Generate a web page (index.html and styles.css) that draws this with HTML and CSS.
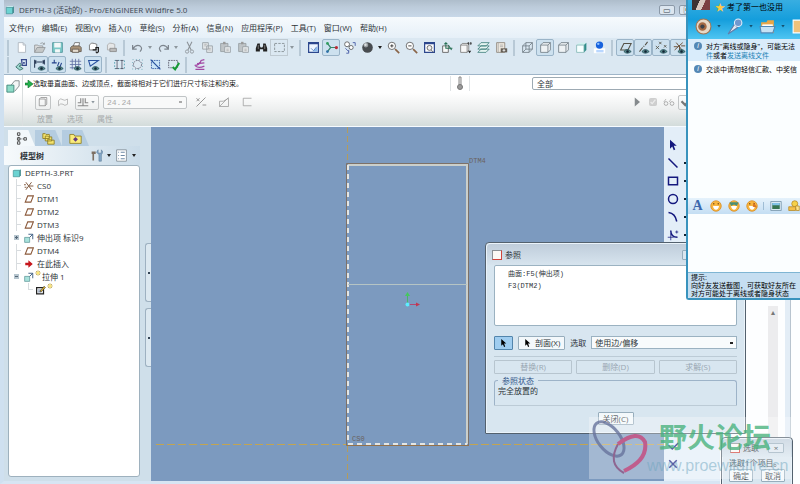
FILE: index.html
```html
<!DOCTYPE html>
<html lang="zh-CN">
<head>
  <meta charset="UTF-8">
  <meta name="viewport" content="width=device-width, initial-scale=1.0">
  <title>DEPTH-3 (活动的) - Pro/ENGINEER Wildfire 5.0</title>
  <link rel="stylesheet" href="styles.css">
</head>
<body>

  <!-- Icon set -->
  <svg class="sprite" aria-hidden="true">
    <symbol id="new" viewBox="0 0 16 16"><path d="M4 2h6l3 3v9H4z" fill="#fff" stroke="#aab3bb"/><path d="M10 2v3h3" fill="none" stroke="#aab3bb"/></symbol>
    <symbol id="open" viewBox="0 0 16 16"><path d="M2 14V5h4l1 1h5v2" fill="#ddd" stroke="#909598"/><path d="M2 14l3-6h10l-3 6z" fill="#c5c8c8" stroke="#909598"/><path d="M9 3q3-2 5 1m0-2v2h-2" fill="none" stroke="#909598"/></symbol>
    <symbol id="save" viewBox="0 0 16 16"><path d="M2 2h12v12H2z" fill="#7cc9c8" stroke="#4d9197"/><path d="M4 2h8v6H4zM5 10h6v4H5z" fill="#f3f7f7"/></symbol>
    <symbol id="print" viewBox="0 0 16 16"><path d="M5 7l2-5h6l-1 5" fill="#fff" stroke="#666"/><path d="M2 8l2-2h9l2 2v5H2z" fill="#a99379" stroke="#5d5349"/><path d="M4 10h8v4H4z" fill="#e6ddd0" stroke="#5d5349"/></symbol>
    <symbol id="mail" viewBox="0 0 16 16"><path d="M3 11V5q2-4 6-2l3 1v7z" fill="#fff" stroke="#666"/><path d="M7 11h4V8h3v5q-2 3-3 0" fill="none" stroke="#222" stroke-width="1.5"/></symbol>
    <symbol id="mailoff" viewBox="0 0 16 16"><path d="M3 11V5q2-4 6-2l3 1v7z" fill="#e5e7e8" stroke="#aaa"/><path d="M6 9h8v4H6z" fill="#bbb" stroke="#888"/></symbol>
    <symbol id="undo" viewBox="0 0 16 16"><path d="M2 5v5h5M2 10q4-6 9-4 4 3 0 7" fill="none" stroke="#7d858e" stroke-width="1.5"/></symbol>
    <symbol id="redo" viewBox="0 0 16 16"><path d="M14 5v5H9M14 10Q10 4 5 6q-4 3 0 7" fill="none" stroke="#7d858e" stroke-width="1.5"/></symbol>
    <symbol id="cut" viewBox="0 0 16 16"><path d="M5 1l5 10M11 1L6 11" fill="none" stroke="#8b9196" stroke-width="1.3"/><circle cx="5" cy="13" r="2" fill="none" stroke="#8b9196"/><circle cx="11" cy="13" r="2" fill="none" stroke="#8b9196"/></symbol>
    <symbol id="copy" viewBox="0 0 16 16"><path d="M2 2h7v8H2zM7 6h7v8H7z" fill="#e4e8ea" stroke="#959ca1"/><path d="M9 9h3M9 11h3M4 4h3M4 6h2" stroke="#aaa"/></symbol>
    <symbol id="paste" viewBox="0 0 16 16"><path d="M2 3h9v10H2z" fill="#bfc4c7" stroke="#959ca1"/><path d="M5 1h3v3H5z" fill="#999"/><path d="M7 7h7v7H7z" fill="#e8ebec" stroke="#959ca1"/><path d="M9 10h3M9 12h3" stroke="#aaa"/></symbol>
    <symbol id="find" viewBox="0 0 16 16"><path d="M3 3h3v3l1 2h2l1-2V3h3l2 6v4h-5v-3H6v3H1V9z" fill="#222"/><path d="M4 5v5M12 5v5" stroke="#8a8a8a"/></symbol>
    <symbol id="marquee" viewBox="0 0 16 16"><path d="M2 3h12v10H2z" fill="none" stroke="#7e878d" stroke-dasharray="3 1.5"/></symbol>
    <symbol id="repaint" viewBox="0 0 16 16"><path d="M2 2h12v12H2z" fill="#eef6ff" stroke="#2b468d" stroke-width="1.5"/><path d="M2 3h12" stroke="#2b468d" stroke-width="2"/><path d="M7 13l6-6v6z" fill="#88b9ec"/><path d="M5 9l3 3 4-5" fill="none" stroke="#4c77b9"/></symbol>
    <symbol id="spin" viewBox="0 0 16 16"><path d="M3 3l4 5-4 5M7 8h6" fill="none" stroke="#36866b" stroke-width="1.5"/><circle cx="3" cy="3" r="1.7" fill="#2f9d5d"/><circle cx="3" cy="13" r="1.7" fill="#2c6fa8"/><circle cx="14" cy="8" r="2" fill="#b92a35"/></symbol>
    <symbol id="orient" viewBox="0 0 16 16"><circle cx="5" cy="4" r="3" fill="#fff" stroke="#555"/><circle cx="10" cy="8" r="2.500" fill="#fff" stroke="#555"/><path d="M12 2h3v4M3 9l4 4M7 11v4H4" fill="none" stroke="#3a4fa0"/></symbol>
    <symbol id="sphere" viewBox="0 0 16 16"><circle cx="8" cy="8" r="6.500" fill="#484c50"/><circle cx="6" cy="5" r="3" fill="#9ba0a4"/><circle cx="5.500" cy="4.500" r="1.500" fill="#dcdfe1"/></symbol>
    <symbol id="zoomin" viewBox="0 0 16 16"><circle cx="6" cy="6" r="4.500" fill="#fff" stroke="#555"/><path d="M10 10l5 5" stroke="#8a6548" stroke-width="2"/><path d="M4 6h4M6 4v4" stroke="#222"/></symbol>
    <symbol id="zoomout" viewBox="0 0 16 16"><circle cx="6" cy="6" r="4.500" fill="#fff" stroke="#555"/><path d="M10 10l5 5" stroke="#8a6548" stroke-width="2"/><path d="M4 6h4" stroke="#222"/></symbol>
    <symbol id="refit" viewBox="0 0 16 16"><path d="M2 2h12v12H2z" fill="#fff" stroke="#2b468d" stroke-width="1.500"/><path d="M2 3h12" stroke="#2b468d" stroke-width="2"/><circle cx="8" cy="8.500" r="3" fill="#f2f2f2" stroke="#555"/><path d="M10 11l3 3" stroke="#555"/></symbol>
    <symbol id="reorient" viewBox="0 0 16 16"><path d="M2 6h7v8H2z" fill="#f8f8f8" stroke="#555"/><path d="M6 2v7h8M4 4l2-2 2 2M9 5l4 6" fill="none" stroke="#287054" stroke-width="1.300"/></symbol>
    <symbol id="saved" viewBox="0 0 16 16"><path d="M2 5h8v9H2zM2 5l2-2h8v8l-2 3" fill="#f7f7f7" stroke="#777"/><path d="M11 2h1v2h-1zM14 2h1v2h-1z" fill="none" stroke="#333"/><path d="M11 12h4l-2 3z" fill="#222"/></symbol>
    <symbol id="layers" viewBox="0 0 16 16"><path d="M1 14l4-4h10l-4 4zM1 10l4-4h10l-4 4zM1 6l4-4h10l-4 4z" fill="#e5f4f1" stroke="#3f7f7d"/></symbol>
    <symbol id="viewmgr" viewBox="0 0 16 16"><path d="M2 2h10v12H2z" fill="#efe9df" stroke="#8a8378"/><path d="M4 2v12M6 5h4M6 7h4" stroke="#aaa"/><path d="M7 9h8v5H7z" fill="#655f57"/><circle cx="11" cy="11.500" r="1.500" fill="#ddd"/></symbol>
    <symbol id="wire" viewBox="0 0 16 16"><path d="M2 6h8v8H2zM6 2h8v8H6zM2 6l4-4M10 6l4-4M10 14l4-4M2 14l4-4" fill="none" stroke="#6e7a82"/></symbol>
    <symbol id="hidden" viewBox="0 0 16 16"><path d="M2 5h9v9H2zM2 5l3-3h9v9l-3 3M11 5l3-3" fill="#eef2f4" stroke="#6e7a82"/></symbol>
    <symbol id="shade" viewBox="0 0 16 16"><path d="M2 5l3-3h9l-3 3z" fill="#d0f1ee"/><path d="M11 5l3-3v9l-3 3z" fill="#318d8a"/><path d="M2 5h9v9H2z" fill="#f6ffff" stroke="#83b6b5"/></symbol>
    <symbol id="realism" viewBox="0 0 16 16"><path d="M1 9h14v6H1z" fill="#fff"/><path d="M4 11h9v3H4z" fill="#b9d7ff"/><circle cx="8" cy="5" r="4.500" fill="#1762dd"/><circle cx="6.500" cy="3.500" r="1.500" fill="#8fc2ff"/></symbol>
    <symbol id="eye" viewBox="0 0 16 16"><path d="M6 13q4-5 9 0-5 4-9 0z" fill="#5a8a8c" stroke="#234f58"/><circle cx="10.500" cy="13" r="1.500" fill="#123"/></symbol>
    <symbol id="plane" viewBox="0 0 16 16"><path d="M2 11L6 3h9l-4 8z" fill="none" stroke="#555247" stroke-width="1.300"/><use href="#eye"/></symbol>
    <symbol id="axis" viewBox="0 0 16 16"><path d="M3 13l4-5M8 7l1-1M10 5l3-4" stroke="#555247" stroke-width="1.300"/><use href="#eye"/></symbol>
    <symbol id="points" viewBox="0 0 16 16"><path d="M5 1l3 3M8 1L5 4M1 6l4 4M5 6l-4 4M11 5l3 3M14 5l-3 3" stroke="#555247"/><use href="#eye"/></symbol>
    <symbol id="csys" viewBox="0 0 16 16"><path d="M2 11L12 2M4 2l7 9M1 7h5M8 6v6M10 6h5" stroke="#6d533c" stroke-width="1.200"/><use href="#eye"/></symbol>
    <symbol id="sketchview" viewBox="0 0 16 16"><path d="M8 2h6v7H9z" fill="none" stroke="#34478b" stroke-width="1.500"/><path d="M10 5h2v2h-2z" fill="#34478b"/><path d="M1 11l5-5 2 3-3 1 5 3-4 2z" fill="#9ed8d0" stroke="#30655f"/></symbol>
    <symbol id="dims" viewBox="0 0 16 16"><path d="M2 2v10M14 2v6M2 5h12M4 3L2 5l2 2M12 3l2 2-2 2" fill="none" stroke="#2b3c58" stroke-width="1.300"/><use href="#eye"/></symbol>
    <symbol id="constr" viewBox="0 0 16 16"><path d="M1 6h6M4 2v4M8 10l2-5M11 11l2-5" fill="none" stroke="#23408a" stroke-width="1.300"/><use href="#eye"/></symbol>
    <symbol id="grid" viewBox="0 0 16 16"><path d="M4 1v13M8 1v13M12 1v10M1 4h14M1 8h14M1 12h6" stroke="#5f6fa3"/><use href="#eye"/></symbol>
    <symbol id="verts" viewBox="0 0 16 16"><path d="M2 3h12L4 10z" fill="#cfe6fa" stroke="#27509d" stroke-width="1.300"/><use href="#eye"/></symbol>
    <symbol id="rg1" viewBox="0 0 16 16"><path d="M2 3h12v10H2z" fill="none" stroke="#49a" stroke-dasharray="2 2"/><path d="M3 3h4M9 3h4M5 3v10M11 3v10M3 13h4M9 13h4" stroke="#556"/></symbol>
    <symbol id="rg2" viewBox="0 0 16 16"><circle cx="8" cy="8" r="5" fill="none" stroke="#556" stroke-dasharray="2 1"/><path d="M2 2h12v12H2z" fill="none" stroke="#59a" stroke-dasharray="1 3"/></symbol>
    <symbol id="rg3" viewBox="0 0 16 16"><path d="M3 3h10v10H3z" fill="#c9e4f8" stroke="#27509d" stroke-dasharray="2 1"/><path d="M2 2l12 12" stroke="#27509d" stroke-width="1.500"/></symbol>
    <symbol id="rg4" viewBox="0 0 16 16"><path d="M2 3h11v9H2z" fill="none" stroke="#556" stroke-dasharray="2 1"/><path d="M7 11l3 3 5-8" fill="none" stroke="#169a36" stroke-width="2.500"/></symbol>
    <symbol id="palette" viewBox="0 0 16 16"><path d="M2 9q6 0 8-6l4-1M3 10q4 3 11 0M5 7l9-1M3 14h11" fill="none" stroke="#a248a4" stroke-width="1.500"/></symbol>
    <symbol id="cube" viewBox="0 0 16 16"><path d="M2 4l2-2h10l-2 2z" fill="#c9f3f0"/><path d="M12 4l2-2v10l-2 2z" fill="#227a7d"/><path d="M2 4h10v10H2z" fill="#6cd3d2" stroke="#3b8c90"/></symbol>
    <symbol id="datum" viewBox="0 0 16 16"><path d="M2 13L6 3h9l-4 10z" fill="none" stroke="#8b5a3b" stroke-width="1.800"/></symbol>
    <symbol id="cs" viewBox="0 0 16 16"><path d="M3 14L12 2M3 2l9 12M8 8h7M0 6h3M1 10h3" stroke="#7b5237" stroke-width="1.500"/></symbol>
    <symbol id="extrude" viewBox="0 0 16 16"><path d="M1 7h8v8H1z" fill="#a9e2dc" stroke="#49888a"/><path d="M7 2h7v8M9 7l5-5" fill="none" stroke="#3e5e82" stroke-width="1.500"/></symbol>
    <symbol id="feature" viewBox="0 0 16 16"><path d="M5 8l5-6h5v6l-5 6" fill="#f4f6f6" stroke="#7c8587"/><path d="M1 7h8v8H1z" fill="#8fdcc8" stroke="#3c8577"/></symbol>
    <symbol id="insert" viewBox="0 0 16 16"><path d="M2 6h5V2l7 6-7 6v-4H2z" fill="#c6171d"/></symbol>
    <symbol id="sketch" viewBox="0 0 16 16"><path d="M1 4h11v10H1z" fill="#fff" stroke="#222" stroke-width="2"/><path d="M3 8h5M3 11h6" stroke="#247"/><path d="M6 10l7-8 2 2-7 7z" fill="#e2b62e" stroke="#333"/></symbol>
    <symbol id="cursor" viewBox="0 0 16 16"><path d="M4 1l9 8H9l2 5-2 1-2-5-3 3z"/></symbol>
    <symbol id="star" viewBox="0 0 16 16"><path d="M8 1v14M1 8h14M3 3l10 10M13 3L3 13" stroke="#b08d10" stroke-width="2"/><path d="M5 5h6v6H5z" fill="#ffe873"/></symbol>
    <symbol id="face" viewBox="0 0 16 16"><circle cx="8" cy="8" r="7" fill="#f9b63e" stroke="#d78a21"/><path d="M4 8h8q-1 5-4 5T4 8z" fill="#fff"/><path d="M5 4v2M11 4v2" stroke="#7a4a10" stroke-width="1.500"/></symbol>
  </svg>

  <!-- Page lying behind the application -->
  <div class="backdrop"><div class="backdrop-scroll">▴</div></div>

  <main class="app">
    <header class="titlebar">
      <svg class="icon small"><use href="#cube"/></svg>
      <span>DEPTH-3 (活动的) - Pro/ENGINEER Wildfire 5.0</span>
      <div class="winbuttons"><button aria-label="最小化">▭</button><button aria-label="最大化">▣</button></div>
    </header>

    <nav class="menubar">
      <button>文件(F)</button><button>编辑(E)</button><button>视图(V)</button><button>插入(I)</button><button>草绘(S)</button><button>分析(A)</button><button>信息(N)</button><button>应用程序(P)</button><button>工具(T)</button><button>窗口(W)</button><button>帮助(H)</button>
    </nav>

    <div class="toolbars">
      <div class="toolbar">
        <i class="sep"></i>
        <button><svg><use href="#new"/></svg></button>
        <button><svg><use href="#open"/></svg></button>
        <button><svg><use href="#save"/></svg></button>
        <button><svg><use href="#print"/></svg></button>
        <button><svg><use href="#mail"/></svg></button>
        <button><svg><use href="#mailoff"/></svg></button>
        <i class="sep"></i>
        <button><svg><use href="#undo"/></svg></button>
        <i class="drop off"></i>
        <button><svg><use href="#redo"/></svg></button>
        <i class="drop off"></i>
        <button><svg><use href="#cut"/></svg></button>
        <button><svg><use href="#copy"/></svg></button>
        <button><svg><use href="#paste"/></svg></button>
        <button><svg><use href="#paste"/></svg></button>
        <button><svg><use href="#find"/></svg></button>
        <button class="framed"><svg><use href="#marquee"/></svg></button>
        <i class="drop off"></i>
        <i class="sep"></i>
        <button><svg><use href="#repaint"/></svg></button>
        <button class="on"><svg><use href="#spin"/></svg></button>
        <button><svg><use href="#orient"/></svg></button>
        <button><svg><use href="#sphere"/></svg></button>
        <i class="drop"></i>
        <button><svg><use href="#zoomin"/></svg></button>
        <button><svg><use href="#zoomout"/></svg></button>
        <button><svg><use href="#refit"/></svg></button>
        <button><svg><use href="#reorient"/></svg></button>
        <button><svg><use href="#saved"/></svg></button>
        <button><svg><use href="#layers"/></svg></button>
        <button><svg><use href="#viewmgr"/></svg></button>
        <i class="sep"></i>
        <button><svg><use href="#wire"/></svg></button>
        <button class="on"><svg><use href="#hidden"/></svg></button>
        <button><svg><use href="#hidden"/></svg></button>
        <button><svg><use href="#shade"/></svg></button>
        <button><svg><use href="#realism"/></svg></button>
        <i class="sep"></i>
        <button class="on"><svg><use href="#plane"/></svg></button>
        <button class="on"><svg><use href="#axis"/></svg></button>
        <button class="on"><svg><use href="#points"/></svg></button>
        <button class="on"><svg><use href="#csys"/></svg></button>
      </div>
      <div class="toolbar">
        <i class="sep"></i>
        <button><svg><use href="#sketchview"/></svg></button>
        <button class="on"><svg><use href="#dims"/></svg></button>
        <button class="on"><svg><use href="#constr"/></svg></button>
        <button><svg><use href="#grid"/></svg></button>
        <button class="on"><svg><use href="#verts"/></svg></button>
        <i class="sep"></i>
        <button><svg><use href="#rg1"/></svg></button>
        <button><svg><use href="#rg2"/></svg></button>
        <button><svg><use href="#rg3"/></svg></button>
        <button><svg><use href="#rg4"/></svg></button>
        <i class="sep"></i>
        <button><svg><use href="#palette"/></svg></button>
      </div>
    </div>

    <section class="dashboard">
      <div class="dash-feature"><svg class="icon"><use href="#feature"/></svg></div>
      <div class="dash-main">
        <div class="message">
          <svg class="arrow" viewBox="0 0 8 8"><path d="M0 3h3V0l5 4-5 4V5H0z" fill="#21b14b" stroke="#11702b" stroke-width=".6"/></svg>
          <span class="message-text">选取垂直曲面、边或顶点，截面将相对于它们进行尺寸标注和约束。</span>
          <span class="status"><svg viewBox="0 0 8 14"><path d="M3 1h2v8H3z" fill="#eee" stroke="#888"/><circle cx="4" cy="11" r="2.500" fill="#999" stroke="#777"/></svg></span>
          <select class="filter" aria-label="过滤器"><option>全部</option></select>
        </div>
        <div class="controls">
          <button class="box"><svg viewBox="0 0 16 16"><path d="M3 4h8v9H3zM3 4l2-2h8v9l-2 2" fill="none" stroke="#8a8a8a"/></svg></button>
          <button><svg viewBox="0 0 16 16"><path d="M2 13V6q3-4 6-1 2 2 6-1v7q-4 3-6 0-3-2-6 2" fill="none" stroke="#aaa"/></svg></button>
          <button class="box wide"><svg viewBox="0 0 16 16"><path d="M1 13h14M1 9h4V3M5 3v6M11 3v6h4M8 3v10" fill="none" stroke="#888" stroke-width="1.500"/></svg><i class="drop off"></i></button>
          <select class="depth" aria-label="深度"><option>24.24</option></select>
          <button class="spread"><svg viewBox="0 0 16 16"><path d="M2 14L14 2M2 3l4 4M6 3L2 7M10 12h5" stroke="#777"/></svg></button>
          <button class="spread"><svg viewBox="0 0 16 16"><path d="M2 14V7h5l7-4v11zM2 14L14 2" fill="none" stroke="#999"/></svg></button>
          <button class="spread"><svg viewBox="0 0 16 16"><path d="M14 3H3v10h11" fill="none" stroke="#999"/></svg></button>
          <div class="confirm">
            <button><svg viewBox="0 0 16 16"><path d="M5 2l7 6-7 6z" fill="#858a8d"/></svg></button>
            <input type="checkbox" checked disabled aria-label="预览">
            <button><svg viewBox="0 0 16 16"><path d="M1 8l3-4M8 8l3-4" stroke="#aaa"/><circle cx="4" cy="10" r="2.500" fill="none" stroke="#999"/><circle cx="12" cy="10" r="2.500" fill="none" stroke="#999"/></svg></button>
            <button class="box"><svg viewBox="0 0 16 16"><path d="M2 7l5 5 7-8" fill="none" stroke="#777" stroke-width="3"/></svg></button>
          </div>
        </div>
        <div class="dash-tabs"><button disabled>放置</button><button disabled>选项</button><button disabled>属性</button></div>
      </div>
    </section>

    <div class="workspace">
      <aside class="navigator">
        <div class="navtabs">
          <button class="active"><svg viewBox="0 0 16 16"><path d="M3 1h3v3H3zM3 7h3v3H3zM3 12h3v3H3zM11 7h3v3h-3z" fill="none" stroke="#333"/><path d="M4.500 4v8M6 8.500h5" stroke="#333" stroke-dasharray="1 1"/></svg></button>
          <button><svg viewBox="0 0 16 16"><path d="M1 2h3l1 1h4v5H1zM4 5h3l1 1h4v5H4zM7 9h3l1 1h4v5H7z" fill="#f4e36c" stroke="#8b7a21"/></svg></button>
          <button><svg viewBox="0 0 16 16"><path d="M1 3h5l1 2h8v9H1z" fill="#faec7c" stroke="#8b7a21"/><path d="M8 6l3 3-3 3-3-3z" fill="#643b81"/></svg></button>
        </div>
        <div class="tree-head">
          <strong>模型树</strong>
          <svg class="icon" viewBox="0 0 16 16"><path d="M2 3h5v3H5v8H3V6H2z" fill="#7d6f62"/><path d="M10 1v4h4V1l2 3-2 3v8h-3V7L8 4z" fill="#86a9c8" stroke="#50708f" stroke-width=".6"/></svg><i class="drop"></i>
          <svg class="icon" viewBox="0 0 16 16"><path d="M2 1h12v14H2z" fill="#fff" stroke="#7b8791"/><path d="M4 4h1M7 4h5M4 8h1M7 8h5M4 12h1M7 12h5" stroke="#4c6f91"/></svg><i class="drop"></i>
        </div>
        <ul class="tree">
          <li class="root"><svg><use href="#cube"/></svg>DEPTH-3.PRT</li>
          <li><i class="node"></i><svg><use href="#cs"/></svg>CS0</li>
          <li><i class="node"></i><svg><use href="#datum"/></svg>DTM1</li>
          <li><i class="node"></i><svg><use href="#datum"/></svg>DTM2</li>
          <li><i class="node"></i><svg><use href="#datum"/></svg>DTM3</li>
          <li><i class="node plus"></i><svg><use href="#extrude"/></svg>伸出项 标识9</li>
          <li><i class="node"></i><svg><use href="#datum"/></svg>DTM4</li>
          <li><i class="node"></i><svg><use href="#insert"/></svg>在此插入</li>
          <li><i class="node minus"></i><svg><use href="#extrude"/></svg><svg class="new"><use href="#star"/></svg>拉伸 1</li>
          <li class="leaf"><i class="node"></i><svg><use href="#sketch"/></svg><svg class="new"><use href="#star"/></svg></li>
        </ul>
      </aside>
      <div class="splitter"><i></i><i></i></div>

      <div class="canvas">
        <svg class="drawing" width="513" height="354" viewBox="151 127 513 354">
          <g fill="none">
            <path d="M347.500 127v36M347.500 446v36" stroke="#b39c5c" stroke-dasharray="6 3"/>
            <path d="M156 444.500h190M470 444.500h194" stroke="#c2a450" stroke-dasharray="8 3"/>
            <path d="M346.500 163.500h122v282h-122z" stroke="#7d7168"/>
            <path d="M348 165h119v279" stroke="#cbcfcb" stroke-width="2"/>
            <path d="M348 165v279h119" stroke="#e3e6e5" stroke-width="2" stroke-dasharray="5 4"/>
            <path d="M347 445.500h122" stroke="#93714b"/>
            <path d="M348 284.500h119" stroke="#b5c4c4"/>
            <path d="M407.500 304v-9" stroke="#48b56b"/>
            <path d="M408 304.500h10" stroke="#b34770"/>
          </g>
          <path d="M405 296l2.500-4 2.500 4z" fill="#45c95d"/>
          <path d="M416 302.500l4 2-4 2z" fill="#c2374f"/>
          <circle cx="407.500" cy="304.500" r="2" fill="#5cecff"/>
          <text x="469" y="163">DTM4</text>
          <text x="352" y="441">CS0</text>
        </svg>
      </div>

      <div class="sketcher">
        <button><svg class="navy"><use href="#cursor"/></svg></button>
        <button class="more"><svg viewBox="0 0 16 16"><path d="M2 2l12 12"/></svg></button>
        <button class="more"><svg viewBox="0 0 16 16"><path d="M2 3h12v10H2z"/></svg></button>
        <button class="more"><svg viewBox="0 0 16 16"><circle cx="8" cy="8" r="6"/></svg></button>
        <button class="more"><svg viewBox="0 0 16 16"><path d="M2 2q9 1 11 12"/></svg></button>
        <button class="more"><svg viewBox="0 0 16 16"><path d="M5 2q0 9 9 9"/><path d="M5 6v9M1 11h8M13 2v4M11 4h4" stroke-width="1"/></svg></button>
        <div class="finish">
          <button><svg viewBox="0 0 16 16"><path d="M2 7l5 5 8-8"/></svg></button>
          <button><svg viewBox="0 0 16 16"><path d="M3 3l10 10M13 3L3 13"/></svg></button>
        </div>
      </div>
    </div>
  </main>

  <form class="dialog references">
    <div class="dialog-title"><i class="sheet"></i>参照<button type="button" class="shut" aria-label="关闭"></button></div>
    <div class="ref-list"><div>曲面:F5(伸出项)</div><div>F3(DTM2)</div></div>
    <div class="pick">
      <button type="button" class="pointer on" aria-label="选取参照"><svg><use href="#cursor"/></svg></button>
      <button type="button" class="pointer"><svg><use href="#cursor"/></svg>剖面(X)</button>
      <label for="pick-mode">选取</label>
      <select id="pick-mode"><option>使用边/偏移</option></select>
    </div>
    <div class="actions"><button disabled>替换(R)</button><button disabled>删除(D)</button><button disabled>求解(S)</button></div>
    <fieldset><legend>参照状态</legend>完全放置的</fieldset>
    <div class="dialog-foot"><button type="button">关闭(C)</button></div>
  </form>

  <section class="dialog chooser">
    <div class="dialog-title"><i class="sheet"></i>选取<button class="shut" aria-label="关闭">×</button></div>
    <p>选取1个项目。</p>
    <div class="choices"><button>确定</button><button>取消</button></div>
  </section>

  <section class="chat">
    <div class="chat-head">
      <div class="chat-name"><i class="avatar"></i><span class="badge">★</span><span>考了第一也没用</span></div>
      <div class="chat-tools">
        <button aria-label="视频"><svg viewBox="0 0 16 16"><circle cx="8" cy="8" r="7" fill="#e8d8c6" stroke="#a07450"/><circle cx="7" cy="8" r="4" fill="#a66a43"/><circle cx="7" cy="8" r="2" fill="#3d4148"/></svg></button><i class="drop"></i>
        <button aria-label="语音"><svg viewBox="0 0 16 16"><path d="M1 15l6-9 3 3z" fill="#e4eaf2" stroke="#607dab"/><circle cx="10.500" cy="4.500" r="3.500" fill="#7098ce" stroke="#e4eefa"/></svg></button><i class="drop"></i>
        <button aria-label="文件"><svg viewBox="0 0 16 16"><path d="M2 4h5l1-2h6v12H2z" fill="#e9a647"/><path d="M3 6h10v6H3z" fill="#fff"/><path d="M1 8h14l-2 6H2z" fill="#c7e2f4" stroke="#5488b5"/></svg></button><i class="drop"></i>
        <button aria-label="应用"><svg viewBox="0 0 16 16"><path d="M2 2h12v12H2z" fill="#f0c27b" stroke="#fff"/></svg></button>
      </div>
    </div>
    <div class="notice tip"><i class="info">i</i><div>对方"离线或隐身"，可能无法<br><a href="#">件</a>或者<a href="#">发送离线文件</a></div></div>
    <div class="notice"><i class="info">i</i><div>交谈中请勿轻信汇款、中奖信</div></div>
    <div class="chat-log"></div>
    <div class="chat-format">
      <button class="font">A</button>
      <button><svg><use href="#face"/></svg></button>
      <button><svg viewBox="0 0 16 16"><use href="#face"/><path d="M2 3h12l-2 5-4-2-4 2z" fill="#4b8f75"/></svg></button>
      <button><svg viewBox="0 0 16 16"><use href="#face"/><path d="M10 3l5 7-6-1z" fill="#d97526"/></svg></button>
      <i></i>
      <button><svg viewBox="0 0 16 16"><path d="M1 2h14v12H1z" fill="#d9e9f4" stroke="#7090a5"/><path d="M3 4h10v8H3z" fill="#367451"/><path d="M3 4h10v3H3z" fill="#82c3e8"/></svg></button>
      <button><svg viewBox="0 0 16 16"><circle cx="9" cy="5" r="4" fill="#f5d14a" stroke="#b58721"/><path d="M1 9h9v5H1z" fill="#f5c04a" stroke="#b58721"/><path d="M10 8h5v6h-4z" fill="#ffe58a" stroke="#b58721"/></svg></button>
    </div>
    <textarea aria-label="输入消息"></textarea>
    <div class="hint"><div>提示:</div><div>向好友发送截图，可获取好友所在</div><div>对方可能处于离线或者隐身状态</div></div>
  </section>

  <div class="watermark">
    <svg viewBox="0 0 60 60"><g fill="none"><ellipse cx="20" cy="22" rx="11" ry="20" transform="rotate(-38 20 22)" stroke="#68749d" stroke-width="3"/><path d="M29 27q20-15 27-2 3 18-21 29" stroke="#c7487c" stroke-width="4"/><path d="M29 27q-11 20 6 29" stroke="#8a5281" stroke-width="2"/></g></svg>
    <div><strong>野火论坛</strong><span>www.proewildfire.cn</span></div>
  </div>

</body>
</html>
```
FILE: styles.css
```css
* {
  box-sizing: border-box;
}

body {
  margin: 0;
  height: 100vh;
  position: relative;
  overflow: hidden;
  background: #fdfeff;
  font-family: "Open Sans", "Noto Sans CJK SC", sans-serif;
  font-size: 8px;
  line-height: 12px;
  color: #2d3338;
}

button, select, input, textarea {
  font: inherit;
  color: inherit;
  margin: 0;
  padding: 0;
  border: 0;
  background: none;
  border-radius: 0;
}

button {
  display: flex;
  align-items: center;
  justify-content: center;
  white-space: nowrap;
}

select {
  appearance: none;
}

svg {
  display: block;
  flex: none;
}

.sprite {
  position: absolute;
  width: 0;
  height: 0;
}

.icon {
  width: 14px;
  height: 14px;
}

.icon.small {
  width: 10px;
  height: 10px;
}

.drop {
  width: 8px;
  height: 3px;
  flex: none;
  background: #222;
  clip-path: polygon(25% 0, 75% 0, 50% 100%);
}

.drop.off {
  background: #8d979e;
}

/* Page behind */
.backdrop {
  position: absolute;
  top: 0;
  right: 10px;
  bottom: 0;
  width: 60px;
  border-right: 5px solid #e3edf6;
  box-shadow: 1px 0 #b8c4cf;
  display: flex;
  justify-content: flex-end;
  padding: 306px 7px 0 0;
}

.backdrop-scroll {
  width: 10px;
  background: #ececee;
  text-align: center;
  color: #777;
}

/* Application window */
.app {
  position: absolute;
  inset: 0 10% 0 0;
  display: flex;
  flex-direction: column;
  background: #dce9f4;
  border-left: 4px solid #cfe0f0;
  border-bottom: 3px solid #d7e5f3;
}

.titlebar {
  height: 17px;
  display: flex;
  align-items: center;
  gap: 4px;
  padding: 3px 2px 0 1px;
  background: linear-gradient(#aebdcb, #bccbda 40%, #c8d8e8);
  color: #3d4751;
}

.winbuttons {
  display: flex;
  gap: 4px;
  margin-left: auto;
  padding-right: 23px;
}

.winbuttons button {
  width: 16px;
  height: 10px;
  border: 1px solid #8b99a8;
  border-radius: 2px;
  background: #dce6ef;
}

.menubar {
  height: 21px;
  display: flex;
  align-items: center;
  gap: 8px;
  padding-left: 5px;
  background: linear-gradient(#f6fafd, #e6f0f8);
}

.toolbars {
  height: 37px;
  padding-top: 1px;
  background: #dbe8f2;
  border-bottom: 1px solid #9fb5c8;
}

.toolbar {
  display: flex;
  align-items: center;
  height: 17px;
}

.toolbar button {
  width: 18px;
  height: 17px;
  flex: none;
}

.toolbar svg {
  width: 13px;
  height: 13px;
}

.toolbar .on {
  background: #cde1ef;
  border: 1px solid #9ab4c8;
  border-radius: 2px;
}

.toolbar .framed {
  border: 1px solid #bfcad2;
}

.sep {
  width: 2px;
  height: 16px;
  margin: 0 3px;
  flex: none;
  background: #b8c9d6;
}

/* Dashboard */
.dashboard {
  height: 52px;
  display: flex;
  background: linear-gradient(#fff 35%, #eceeee 70%, #d3dcdb);
  border-bottom: 1px solid #f6fbff;
}

.dash-feature {
  width: 19px;
  padding: 4px 2px;
  border-right: 1px solid #dadedf;
}

.dash-main {
  flex: 1;
  min-width: 0;
}

.message {
  display: flex;
  align-items: center;
  height: 17px;
}

.message .arrow {
  width: 8px;
  height: 8px;
  margin-left: 2px;
}

.message-text {
  flex: 1;
  font-size: 7px;
  color: #222;
}

.status {
  width: 20px;
  height: 15px;
  border: solid #dfe3e5;
  border-width: 0 1px;
  display: flex;
  justify-content: center;
}

.status svg {
  width: 8px;
  height: 14px;
}

.filter {
  width: 188px;
  height: 13px;
  margin-left: 62px;
  padding-left: 4px;
  border: 1px solid #9daab3;
  border-radius: 2px;
  background: #fff;
}

.controls {
  display: flex;
  align-items: center;
  gap: 4px;
  height: 20px;
  padding-left: 12px;
}

.controls svg {
  width: 12px;
  height: 12px;
}

.controls button {
  width: 16px;
  height: 15px;
}

.controls .box {
  border: 1px solid #c2c5c6;
  border-radius: 2px;
}

.controls .wide {
  width: 24px;
}

.controls .spread {
  width: 19px;
}

.depth {
  width: 84px;
  height: 13px;
  padding-left: 3px;
  border: 1px solid #c0c4c6;
  border-radius: 2px;
  font-family: "Liberation Mono", monospace;
  color: #aaa;
  background: linear-gradient(#aaa, #aaa) right 4px center / 3px 2px no-repeat #f8f9f9;
}

.confirm {
  display: flex;
  align-items: center;
  gap: 1px;
  margin-left: auto;
  padding-right: 26px;
}

.confirm input {
  width: 8px;
  height: 8px;
  margin: 0 3px;
}

.dash-tabs {
  display: flex;
  gap: 14px;
  height: 13px;
  padding-left: 14px;
  color: #a5a9aa;
}

/* Work area */
.workspace {
  flex: 1;
  min-height: 0;
  display: flex;
}

.navigator {
  width: 136px;
  padding: 3px 0 4px 4px;
  display: flex;
  flex-direction: column;
  background: #cfdfea;
}

.navtabs {
  display: flex;
  height: 16px;
}

.navtabs button {
  width: 27px;
  background: #b4cce0;
  clip-path: polygon(0 0, 75% 0, 100% 100%, 0 100%);
}

.navtabs .active {
  background: #f3f8fb;
}

.navtabs svg {
  width: 13px;
  height: 13px;
}

.tree-head {
  display: flex;
  align-items: center;
  gap: 2px;
  height: 19px;
  margin-left: -4px;
  padding: 0 2px 0 16px;
  background: linear-gradient(90deg, #f7fafc, #c9dbe8);
}

.tree-head strong {
  flex: 1;
}

.tree-head .icon {
  width: 13px;
  height: 13px;
}

.tree {
  flex: 1;
  list-style: none;
  margin: 0;
  padding: 0 3px;
  border: 1px solid #9eb1be;
  border-radius: 3px;
  background: #fff;
}

.tree li {
  display: flex;
  align-items: center;
  gap: 3px;
  height: 13px;
  white-space: nowrap;
}

.tree svg {
  width: 10px;
  height: 10px;
}

.tree .new {
  width: 6px;
  height: 6px;
  margin: 0 -2px;
  align-self: flex-start;
}

.node {
  width: 9px;
  height: 13px;
  flex: none;
  background: linear-gradient(#d8dcdf, #d8dcdf) 4px 0 / 1px 13px no-repeat,
    linear-gradient(#d8dcdf, #d8dcdf) 4px 6px / 5px 1px no-repeat;
}

.minus {
  background: linear-gradient(#567, #567) 3px 6px / 3px 1px no-repeat,
    linear-gradient(#b6c5ce, #b6c5ce) 2px 4px / 5px 5px no-repeat;
}

.plus {
  background: linear-gradient(#567, #567) 3px 6px / 3px 1px no-repeat,
    linear-gradient(#567, #567) 4px 5px / 1px 3px no-repeat,
    linear-gradient(#b6c5ce, #b6c5ce) 2px 4px / 5px 5px no-repeat;
}

.tree .leaf {
  padding-left: 12px;
}

.leaf .node {
  background: linear-gradient(#d8dcdf, #d8dcdf) 4px 0 / 1px 7px no-repeat,
    linear-gradient(#d8dcdf, #d8dcdf) 4px 6px / 5px 1px no-repeat;
}

.splitter {
  width: 11px;
  display: flex;
  flex-direction: column;
  align-items: flex-end;
  gap: 6px;
  padding-top: 116px;
  background: #cfdfea;
}

.splitter i {
  width: 6px;
  height: 59px;
  border: 1px solid #9eb1c1;
  border-right: 0;
  border-radius: 3px 0 0 3px;
  background: linear-gradient(#345, #345) center / 2px 2px no-repeat #dce8f0;
}

.canvas {
  flex: 1;
  min-width: 0;
  overflow: hidden;
  background: #7c9abf;
}

.drawing text {
  font-family: "Liberation Mono", monospace;
  font-size: 7px;
  fill: #6a625e;
}

.sketcher {
  width: 56px;
  padding: 9px 0 8px;
  display: flex;
  flex-direction: column;
  background: #e3eef8;
}

.sketcher button {
  width: 18px;
  height: 18px;
}

.sketcher .more {
  width: 22px;
  padding-left: 3px;
  background: linear-gradient(#123, #123) right center / 2px 2px no-repeat;
  justify-content: flex-start;
}

.sketcher svg {
  width: 12px;
  height: 12px;
  fill: none;
  stroke: #14187e;
  stroke-width: 2;
}

.sketcher .navy {
  fill: #14187e;
  stroke: none;
}

.finish {
  margin-top: auto;
}

/* Dialogs */
.dialog {
  position: absolute;
  border: 1px solid #53616e;
  border-radius: 4px 4px 1px 1px;
  background: #d8e6f0;
  box-shadow: inset 0 0 0 1px #eaf3fa;
}

.dialog button {
  border: 1px solid #97adbc;
  border-radius: 1px;
  background: #f3f8fb;
}

.dialog button:disabled {
  color: #99a7b2;
  background: none;
  border-color: #b7c5cf;
}

.references {
  left: 485px;
  top: 242px;
  width: 261px;
  padding: 0 8px 8px;
}

.dialog-title {
  display: flex;
  align-items: center;
  gap: 3px;
  height: 21px;
  margin: 1px -7px 0;
  padding: 0 5px;
  border-radius: 4px 4px 0 0;
  background: linear-gradient(#bfcddb, #d7e4ee);
}

.sheet {
  width: 10px;
  height: 10px;
  flex: none;
  border: 1px solid #8a8f94;
  border-right-color: #d2443b;
  border-bottom-color: #d2443b;
  background: #fbf8f5;
}

.dialog .shut {
  width: 16px;
  height: 10px;
  margin-left: auto;
  margin-right: 41px;
  background: #dbe6ef;
}

.ref-list {
  height: 61px;
  padding: 2px 13px;
  border: 1px solid #9bb2c1;
  border-radius: 2px;
  background: #fff;
  font-family: "Liberation Mono", "Noto Sans CJK SC", monospace;
  font-size: 7px;
}

.pick {
  display: flex;
  align-items: center;
  gap: 5px;
  height: 31px;
  padding-top: 3px;
  border-bottom: 1px solid #bccbd6;
}

.pick .pointer {
  height: 14px;
  padding: 0 4px;
  gap: 3px;
}

.pick .on {
  background: #9fcdf0;
  border-color: #5285ac;
}

.pick svg {
  width: 9px;
  height: 10px;
}

.pick select {
  flex: 1;
  height: 13px;
  padding-left: 3px;
  border: 1px solid #9bb2c1;
  background: linear-gradient(#222, #222) right 3px center / 3px 2px no-repeat #f8fbfc;
}

.actions {
  display: grid;
  grid-template-columns: repeat(3, 1fr);
  gap: 4px;
  padding: 3px 0 1px;
}

.actions button {
  height: 14px;
}

.references fieldset {
  margin: 0;
  height: 30px;
  padding: 0 3px;
  border: 1px solid #9db3c8;
  border-bottom: 0;
  border-radius: 3px 3px 0 0;
  line-height: 9px;
}

.references legend {
  padding: 0 4px;
  line-height: 11px;
  color: #365a8c;
}

.dialog-foot {
  display: flex;
  justify-content: center;
  padding-top: 6px;
  border-top: 1px solid #bccbd6;
}

.dialog-foot button {
  width: 36px;
  height: 13px;
}

.chooser {
  left: 721px;
  top: 437px;
  width: 72px;
  padding: 0 7px 4px;
}

.chooser .dialog-title {
  height: 18px;
  padding: 0 8px;
}

.chooser .dialog-title .shut {
  margin-right: 0;
}

.chooser p {
  margin: 0;
}

.choices {
  display: flex;
  justify-content: space-between;
}

.choices button {
  width: 24px;
  height: 13px;
}

/* Chat window */
.chat {
  position: absolute;
  left: 686px;
  top: 0;
  right: 0;
  height: 300px;
  display: flex;
  flex-direction: column;
  border: solid #3993bd;
  border-width: 0 0 2px 2px;
  border-radius: 0 0 0 3px;
  background: #fbfeff;
  overflow: hidden;
  font-family: "Liberation Sans", "Noto Sans CJK SC", sans-serif;
  font-size: 7px;
  line-height: 9px;
  color: #000;
}

.chat-head {
  height: 39px;
  flex: none;
  background: linear-gradient(#38aee1, #159edc 50%, #4fc5f2);
}

.chat-name {
  display: flex;
  align-items: center;
  height: 14px;
  padding-left: 4px;
  font-size: 8px;
  white-space: nowrap;
}

.avatar {
  width: 18px;
  height: 10px;
  margin-right: 5px;
  align-self: flex-start;
  background: linear-gradient(115deg, #3c3234 35%, #d9c8c1 36% 60%, #7c3e41 61%);
}

.badge {
  width: 12px;
  font-size: 10px;
  color: #ffc93e;
}

.chat-tools {
  display: flex;
  align-items: center;
  height: 24px;
  padding-left: 7px;
}

.chat-tools button {
  width: 18px;
  margin-right: 3px;
}

.chat-tools svg {
  width: 17px;
  height: 17px;
}

.chat-tools .drop {
  margin-right: 4px;
  background: #14506f;
}

.notice {
  display: flex;
  gap: 4px;
  padding: 4px 0 3px 6px;
  white-space: nowrap;
}

.tip {
  padding: 3px 0 1px 6px;
  background: #d9ecfb;
}

.info {
  width: 8px;
  height: 8px;
  flex: none;
  border-radius: 50%;
  background: #5488b5;
  color: #fff;
  line-height: 8px;
  text-align: center;
}

.chat a {
  color: #2383b5;
  text-decoration: none;
}

.chat-log {
  flex: 1;
}

.chat-format {
  display: flex;
  align-items: center;
  gap: 5px;
  height: 16px;
  padding-left: 3px;
  background: linear-gradient(#e5f2fc, #c4def3);
}

.chat-format button {
  width: 13px;
}

.chat-format svg {
  width: 12px;
  height: 12px;
}

.chat-format i {
  width: 1px;
  height: 8px;
  background: #9fbdd5;
}

.chat-format .font {
  font-family: "Liberation Serif", serif;
  font-size: 14px;
  font-weight: bold;
  line-height: 14px;
  color: #3b67ad;
}

.chat textarea {
  width: 100%;
  height: 58px;
  resize: none;
}

.hint {
  height: 26px;
  padding: 1px 0 0 3px;
  border-top: 1px solid #7eb5d3;
  background: #c5def1;
  line-height: 8px;
  white-space: nowrap;
}

/* Forum watermark */
.watermark {
  position: absolute;
  left: 589px;
  top: 417px;
  width: 202px;
  height: 62px;
  background: rgba(255, 255, 255, 0.3);
  pointer-events: none;
}

.watermark svg {
  width: 60px;
  height: 60px;
  opacity: 0.8;
}

.watermark div {
  position: absolute;
  left: 58px;
  top: 3px;
  display: flex;
  flex-direction: column;
}

.watermark strong {
  padding-left: 12px;
  font-family: "Noto Sans CJK SC", sans-serif;
  font-size: 28px;
  line-height: 32px;
  color: rgba(72, 178, 124, 0.8);
}

.watermark span {
  font-family: "Liberation Sans", sans-serif;
  font-size: 16px;
  line-height: 28px;
  color: rgba(110, 165, 190, 0.5);
}
```
